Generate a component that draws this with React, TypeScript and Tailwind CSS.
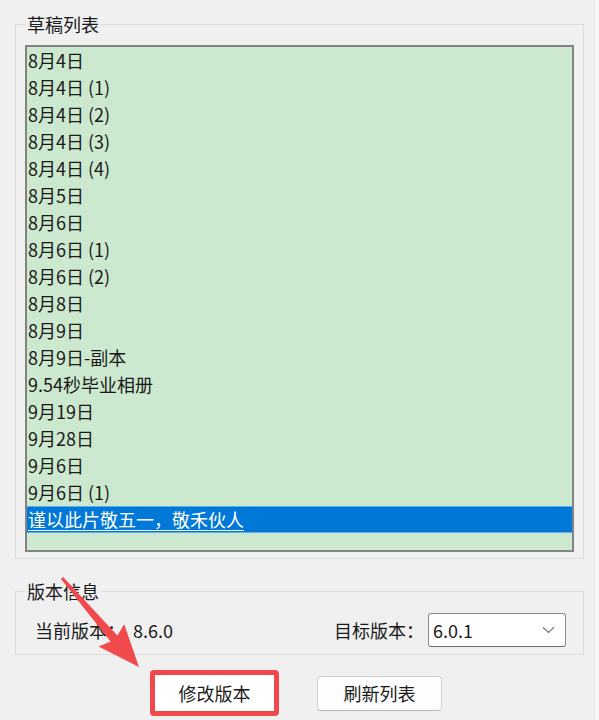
import React from "react";

const items = [
  "8月4日",
  "8月4日 (1)",
  "8月4日 (2)",
  "8月4日 (3)",
  "8月4日 (4)",
  "8月5日",
  "8月6日",
  "8月6日 (1)",
  "8月6日 (2)",
  "8月8日",
  "8月9日",
  "8月9日-副本",
  "9.54秒毕业相册",
  "9月19日",
  "9月28日",
  "9月6日",
  "9月6日 (1)",
];

export default function App() {
  return (
    <div
      className="relative w-[599px] h-[720px] overflow-hidden bg-[#f7f7f7] text-[18px] text-[#1a1a1a]"
      style={{ fontFamily: '"Noto Sans CJK SC", "Noto Sans", sans-serif' }}
    >
      <div className="w-[595px] h-[720px] bg-[#f0f0f0] border-r border-[#e6e6e6] pl-[15px] pt-[12px]">
        {/* 草稿列表 */}
        <fieldset className="w-[569px] border border-[#dcdcdc] px-[9px] pb-[6px] pt-[9px]">
          <legend className="px-[2px] leading-[24px]">草稿列表</legend>
          <div className="h-[507px] border-2 border-[#838383] bg-[#cce8cf] flex flex-col">
            {items.map((t) => (
              <div key={t} className="h-[27px] leading-[27px] pl-px whitespace-nowrap">
                {t}
              </div>
            ))}
            <div className="h-[27px] leading-[25px] pl-px whitespace-nowrap bg-[#0078d7] border-y border-[#5aaef0] text-white">
              <span className="underline underline-offset-[3px] decoration-1">谨以此片敬五一，敬禾伙人</span>
            </div>
          </div>
        </fieldset>

        {/* 版本信息 */}
        <fieldset className="mt-[20px] w-[569px] border border-[#dcdcdc] pl-[9px] pr-[17px] pt-[10px] pb-[7px]">
          <legend className="px-[2px] leading-[24px]">版本信息</legend>
          <div className="flex items-center h-[34px] pl-[10px]">
            <span className="w-[98px] whitespace-nowrap">当前版本：</span>
            <span>8.6.0</span>
            <span className="ml-auto mr-[4px] whitespace-nowrap">目标版本：</span>
            <div className="w-[138px] h-[34px] bg-white border border-[#8c8c8c] border-b-[#6e6e6e] rounded-[3px] flex items-center pl-[4px] pr-[10px]">
              <span>6.0.1</span>
              <svg className="ml-auto" width="13" height="8" viewBox="0 0 13 8" fill="none">
                <path d="M1 1.2 L6.5 6.5 L12 1.2" stroke="#7a7a7a" strokeWidth="1.2" />
              </svg>
            </div>
          </div>
        </fieldset>

        {/* Buttons */}
        <div className="flex items-center mt-[15px]">
          <div className="ml-[135px] w-[129px] h-[46px] rounded-[4px] border-[5px] border-[#f0484b] bg-white flex items-center justify-center">
            修改版本
          </div>
          <button className="ml-[38px] w-[125px] h-[35px] rounded-[4px] border border-[#d0d0d0] border-b-[#b8b8b8] bg-[#fdfdfd] flex items-center justify-center">
            刷新列表
          </button>
        </div>
      </div>

      {/* Red annotation arrow */}
      <svg
        className="absolute left-0 top-0 pointer-events-none"
        width="599"
        height="720"
        viewBox="0 0 599 720"
      >
        <polygon
          points="63.1,577 117.4,635.4 124.2,624.2 139,667 98.6,646.6 110.6,641.4 60.9,579"
          fill="#f04a4c"
        />
      </svg>
    </div>
  );
}
